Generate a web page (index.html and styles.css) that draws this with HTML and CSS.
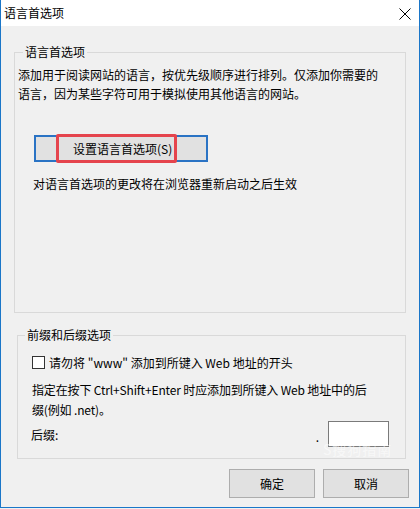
FILE: index.html
```html
<!DOCTYPE html>
<html lang="zh-CN">
<head>
<meta charset="utf-8">
<title>语言首选项</title>
<link rel="stylesheet" href="styles.css">
</head>
<body>
<div class="window">
  <div class="titlebar">
    <span class="title">语言首选项</span>
    <svg class="close" width="12" height="12" viewBox="0 0 12 12"><path d="M0.5 0.5 L11.5 11.5 M11.5 0.5 L0.5 11.5" stroke="#000" stroke-width="1" fill="none"/></svg>
  </div>
  <div class="client">
    <fieldset class="group group-lang">
      <legend class="legend">语言首选项</legend>
      <p class="desc">添加用于阅读网站的语言，按优先级顺序进行排列。仅添加你需要的<br>语言，因为某些字符可用于模拟使用其他语言的网站。</p>
      <div class="setbtn"><span class="hl">设置语言首选项(S)</span></div>
      <p class="note">对语言首选项的更改将在浏览器重新启动之后生效</p>
    </fieldset>
    <fieldset class="group group-fix">
      <legend class="legend legend2">前缀和后缀选项</legend>
      <div class="checkrow"><span class="checkbox"></span><span>请勿将 "www" 添加到所键入 Web 地址的开头</span></div>
      <p class="spec">指定在按下 Ctrl+Shift+Enter 时应添加到所键入 Web 地址中的后<br>缀(例如 .net)。</p>
      <div class="suffixrow"><span class="suffixlabel">后缀:</span><span class="dot">.</span><span class="input"></span></div>
    </fieldset>
    <div class="buttons">
      <div class="btn">确定</div>
      <div class="btn">取消</div>
    </div>
    <div class="watermark">S搜狗指南</div>
  </div>
</div>
</body>
</html>
```

FILE: styles.css
```css
* { box-sizing: border-box; }
html, body { margin: 0; padding: 0; }
body {
  width: 420px;
  height: 509px;
  overflow: hidden;
  font-family: "Noto Sans CJK SC", "Microsoft YaHei", sans-serif;
  font-size: 12px;
  color: #000;
  background: #f0f0f0;
}
.window {
  width: 420px;
  height: 508px;
  border-left: 1px solid #1a76c8;
  border-right: 1px solid #1a76c8;
  border-bottom: 1px solid #1a76c8;
  display: flex;
  flex-direction: column;
  background: #f0f0f0;
}
.titlebar {
  height: 26px;
  background: #fff;
  display: flex;
  align-items: center;
  justify-content: space-between;
  padding: 0 8px 0 3px;
  flex: none;
}
.title { line-height: 16px; }
.close { display: block; margin-top: 1px; }
.client {
  flex: 1;
  position: relative;
  display: flex;
  flex-direction: column;
}
.group {
  margin: 0;
  padding: 0 3px;
  border: 1px solid #d9d9d9;
  min-width: 0;
}
.legend {
  padding: 0 2px;
  line-height: 16px;
  margin-left: 5px;
}
.group-lang {
  margin: 18px 0 0 13px;
  width: 392px;
  height: 269px;
}
.group-fix {
  margin: 14px 0 0 16px;
  width: 389px;
  height: 132px;
}
.legend2 { margin-left: 4px; }
p { margin: 0; }
.desc { line-height: 19px; padding-top: 5px; }
.setbtn {
  margin: 32px 0 0 16px;
  width: 174px;
  height: 27px;
  border: 2px solid #2a73c4;
  background: #e1e1e1;
  position: relative;
}
.hl {
  position: absolute;
  left: 20px;
  top: -3px;
  width: 121px;
  height: 29px;
  border: 3px solid #e5444d;
  border-radius: 2px;
  display: flex;
  align-items: center;
  padding-left: 14px;
  line-height: 16px;
}
.note { margin: 12px 0 0 15px; line-height: 19px; }
.checkrow {
  display: flex;
  align-items: center;
  margin: 10px 0 0 11px;
  line-height: 19px;
  gap: 4px;
}
.checkbox {
  width: 13px;
  height: 13px;
  border: 1px solid #333;
  background: #fff;
  flex: none;
}
.spec { margin: 8px 0 0 11px; line-height: 20px; letter-spacing: -0.15px; }
.suffixrow {
  display: flex;
  align-items: center;
  margin: 1px 0 0 10px;
  height: 26px;
}
.suffixlabel { flex: 1; }
.dot { margin-right: 9px; margin-top: 6px; line-height: 10px; }
.input {
  width: 61px;
  height: 26px;
  border: 1px solid #7a7a7a;
  background: #fff;
  margin-right: 13px;
}
.buttons {
  display: flex;
  justify-content: flex-end;
  gap: 8px;
  margin: 10px 10px 0 0;
}
.btn {
  width: 86px;
  height: 29px;
  border: 1px solid #adadad;
  background: #e1e1e1;
  display: flex;
  align-items: center;
  justify-content: center;
  line-height: 16px;
}
.watermark {
  position: absolute;
  left: 322px;
  top: 413px;
  font-size: 14px;
  color: rgba(255, 255, 255, 0.55);
  letter-spacing: 1px;
}
```
